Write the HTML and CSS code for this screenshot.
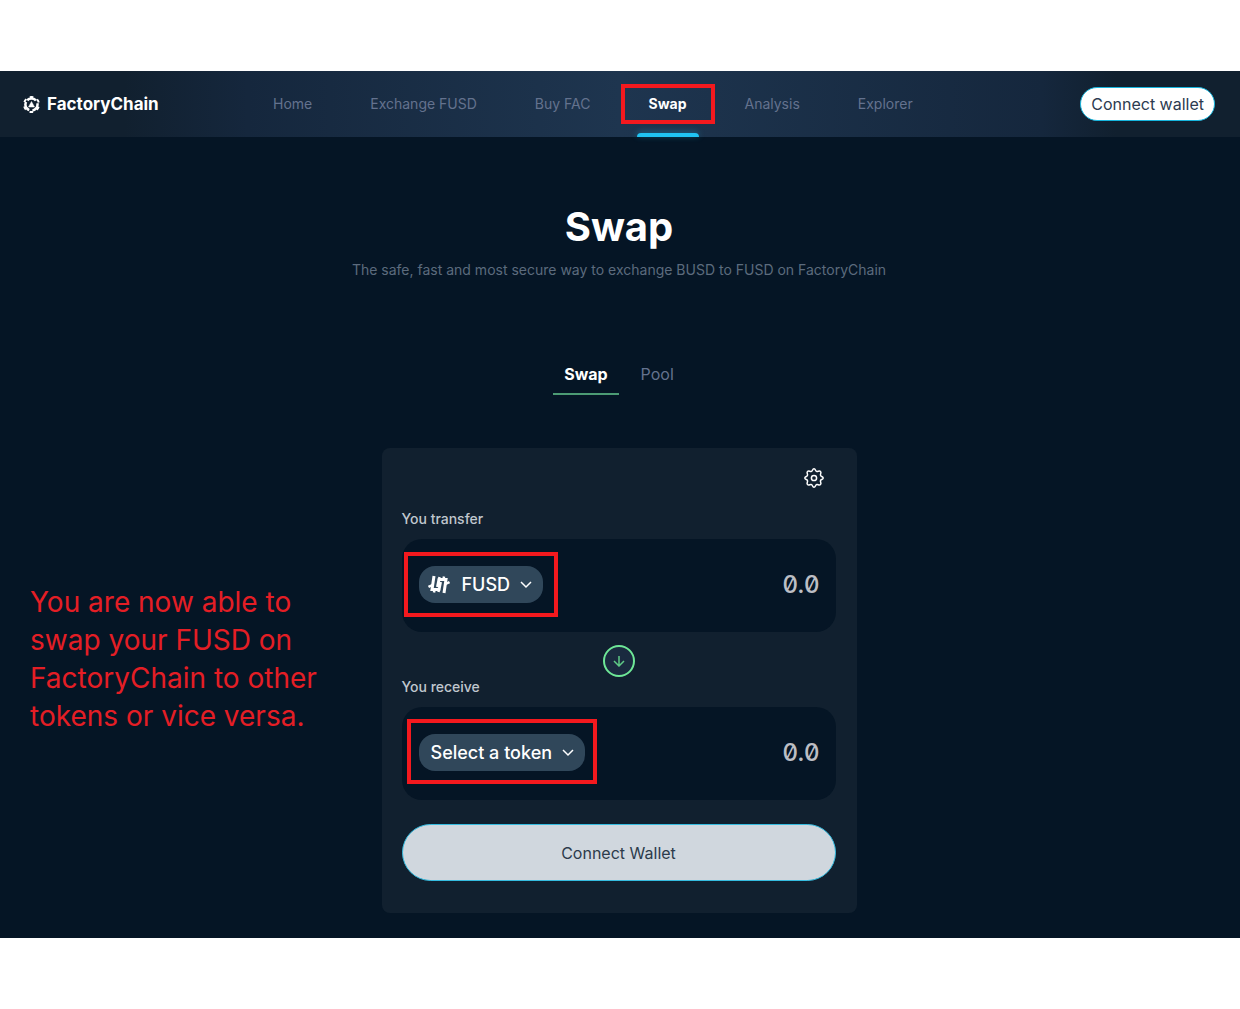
FILE: index.html
```html
<!DOCTYPE html>
<html lang="en">
<head>
  <meta charset="UTF-8">
  <title>Swap - FactoryChain</title>
  <meta name="viewport" content="width=device-width, initial-scale=1.0">
  <link rel="stylesheet" href="styles.css">
</head>

<body>
  <div class="page">
    <!-- Navigation -->
    <header class="topbar">
      <a href="#home" class="brand">
        <svg width="17" height="17" viewBox="0 0 34 34" fill="none" stroke="#fff">
          <circle cx="17" cy="17" r="12" stroke-width="5" stroke-dasharray="19 6.13" transform="rotate(-135 17 17)"/>
          <circle cx="17" cy="17" r="15" stroke-width="4" stroke-dasharray="7 8.7" transform="rotate(-103 17 17)"/>
          <path d="M17 11L23 22H11Z" fill="#fff" stroke-width="1"/>
        </svg>
        <span>FactoryChain</span>
      </a>
      <nav class="menu">
        <a href="#home">Home</a>
        <a href="#exchange">Exchange FUSD</a>
        <a href="#buy">Buy FAC</a>
        <a href="#swap" class="active mark">Swap</a>
        <a href="#analysis">Analysis</a>
        <a href="#explorer">Explorer</a>
      </nav>
      <button type="button" class="wallet-btn">Connect wallet</button>
    </header>

    <main id="swap">
      <!-- Title -->
      <section class="intro">
        <h1>Swap</h1>
        <p>The safe, fast and most secure way to exchange BUSD to FUSD on FactoryChain</p>
      </section>

      <div class="tabs">
        <a href="#swap" class="active">Swap</a>
        <a href="#pool">Pool</a>
      </div>

      <div class="content">
        <p class="note">You are now able to<br>swap your FUSD on<br>FactoryChain to other<br>tokens or vice versa.</p>

        <!-- Swap form -->
        <form class="card">
          <button type="button" class="settings" aria-label="Settings">
            <svg width="20" height="20" viewBox="0 0 20 20" fill="none" stroke="#fff" stroke-width="1.5" stroke-linejoin="round">
              <path d="M7.3 3.5C8.6 3.5 8.3 .8 10 .8C11.7 .8 11.4 3.5 12.7 3.5C13.8 4 15.2 2.2 16.5 3.5C17.8 4.8 16 6.2 16.5 7.3C16.5 8.6 19.2 8.3 19.2 10C19.2 11.7 16.5 11.4 16.5 12.7C16 13.8 17.8 15.2 16.5 16.5C15.2 17.8 13.8 16 12.7 16.5C11.4 16.5 11.7 19.2 10 19.2C8.3 19.2 8.6 16.5 7.3 16.5C6.2 16 4.8 17.8 3.5 16.5C2.2 15.2 4 13.8 3.5 12.7C3.5 11.4 .8 11.7 .8 10C.8 8.3 3.5 8.6 3.5 7.3C4 6.2 2.2 4.8 3.5 3.5C4.8 2.2 6.2 4 7.3 3.5Z"/>
              <circle cx="10" cy="10" r="2.6"/>
            </svg>
          </button>

          <label for="transfer">You transfer</label>
          <div class="amount">
            <button type="button" class="token mark">
              <svg class="token-logo" width="22" height="19" viewBox="0 0 44 38" fill="none" stroke="#fff" stroke-width="6">
                <path d="M12 2L8 29H22L25 14M32 36L36 9H22L19 24"/>
                <path stroke-width="5" d="M9 20L1 24M13 29L12 35M22 28L21 34M35 18L43 14M31 9L32 3M22 10L23 4"/>
              </svg>
              <span>FUSD</span>
              <svg width="12" height="8" viewBox="0 0 12 8" fill="none" stroke="#fff" stroke-width="1.5"><path d="M1 1L6 6L11 1"/></svg>
            </button>
            <input type="text" id="transfer" placeholder="0.0">
          </div>

          <button type="button" class="switch" aria-label="Switch tokens">
            <svg width="12" height="12" viewBox="0 0 12 12" fill="none" stroke="#5fca86" stroke-width="1.5"><path d="M6 1V11M1 6L6 11L11 6"/></svg>
          </button>

          <label for="receive">You receive</label>
          <div class="amount">
            <button type="button" class="token select mark">
              <span>Select a token</span>
              <svg width="12" height="8" viewBox="0 0 12 8" fill="none" stroke="#fff" stroke-width="1.5"><path d="M1 1L6 6L11 1"/></svg>
            </button>
            <input type="text" id="receive" placeholder="0.0">
          </div>

          <button type="button" class="connect">Connect Wallet</button>
        </form>
      </div>
    </main>
  </div>
</body>
</html>
```
FILE: styles.css
```css
/* General Layout */
* {
  box-sizing: border-box;
}

body {
  font-family: Inter, "Liberation Sans", sans-serif;
  margin: 0;
  padding: 71px 0;
  background: white;
}

a {
  text-decoration: none;
}

button,
input {
  font-family: inherit;
}

button {
  cursor: pointer;
}

.page {
  background: #051525;
  padding-bottom: 25px;
}

main {
  padding-right: 2px;
}

/* Header */
.topbar {
  display: grid;
  grid-template-columns: 250px 1fr auto;
  align-items: center;
  height: 66px;
  padding: 0 25px 0 23px;
  background: linear-gradient(90deg, #11202f 10%, #15273d 20%, #1e354f 50%, #15273d 84%, #11202f 90%);
}

.brand {
  display: flex;
  align-items: center;
  gap: 7px;
  color: white;
  font-size: 17px;
  font-weight: 700;
}

.menu {
  display: flex;
  gap: 58px;
  height: 66px;
}

.menu a {
  position: relative;
  color: #64728e;
  font-size: 14px;
  line-height: 66px;
}

.menu a.active {
  color: white;
  font-weight: 700;
}

.menu a.active::before {
  content: "";
  position: absolute;
  left: -12px;
  right: -12px;
  bottom: 0;
  height: 4px;
  border-radius: 4px 4px 0 0;
  background: #20c3f3;
  box-shadow: 0 -1px 6px rgba(32, 195, 243, 0.4);
}

.wallet-btn {
  height: 34px;
  padding: 0 10px;
  border: 1px solid #16b4dc;
  border-radius: 17px;
  background: white;
  color: #2c3b50;
  font-size: 16px;
}

/* Red frames around the highlighted controls */
.mark {
  position: relative;
}

.mark::after {
  content: "";
  position: absolute;
  inset: -14px -15px;
  border: 4px solid #f4191e;
  pointer-events: none;
}

.menu .mark::after {
  inset: 13px -28px;
}

.token.select.mark::after {
  inset: -15px -12px -13px;
}

/* Title and tabs */
.intro {
  padding-top: 66px;
  text-align: center;
}

h1 {
  margin: 0;
  color: white;
  font-size: 40px;
  line-height: 48px;
}

.intro p {
  margin: 9px 0 0;
  color: #5c6b7d;
  font-size: 14px;
  line-height: 20px;
}

.tabs {
  display: flex;
  justify-content: center;
  gap: 11px;
  margin-top: 76px;
}

.tabs a {
  padding: 7px 11px 8px;
  border-bottom: 2px solid transparent;
  color: #64728e;
  font-size: 16px;
  line-height: 22px;
}

.tabs a.active {
  border-color: #4c9b74;
  color: white;
  font-weight: 700;
}

/* Note and swap card */
.content {
  display: grid;
  grid-template-columns: 1fr 475px 1fr;
  margin-top: 53px;
}

.note {
  margin: 135px 0 0 30px;
  color: #e41e25;
  font-size: 28px;
  line-height: 38px;
  white-space: nowrap;
}

.card {
  display: flex;
  flex-direction: column;
  padding: 20px 21px 32px 20px;
  border-radius: 8px;
  background: #11202f;
}

.card label {
  color: #c0c7ce;
  font-size: 14px;
  font-weight: 500;
  line-height: 20px;
}

.settings {
  display: flex;
  align-self: flex-end;
  margin: 0 12px 21px 0;
  padding: 0;
  border: 0;
  background: none;
}

.amount {
  display: flex;
  align-items: center;
  justify-content: space-between;
  height: 93px;
  margin-top: 10px;
  padding: 0 16px 2px 17px;
  border-radius: 20px;
  background: #051525;
}

.token {
  display: flex;
  align-items: center;
  gap: 10px;
  height: 37px;
  padding: 0 11px 0 9px;
  border: 0;
  border-radius: 16px;
  background: #30475a;
  color: white;
  font-size: 18px;
  font-weight: 500;
  white-space: nowrap;
}

.token.select {
  padding-left: 12px;
}

.token-logo {
  margin-right: 2px;
}

.amount input {
  width: 120px;
  padding: 0;
  border: 0;
  background: none;
  color: white;
  font-size: 24px;
  font-weight: 500;
  font-feature-settings: "zero";
  text-align: right;
}

.amount input::placeholder {
  color: #bcbec4;
}

.switch {
  display: flex;
  align-items: center;
  justify-content: center;
  align-self: center;
  width: 32px;
  height: 32px;
  margin: 13px 0 0;
  padding: 0;
  border: 2px solid #6ee797;
  border-radius: 50%;
  background: #1a2a3f;
}

.connect {
  height: 57px;
  margin-top: 24px;
  border: 1px solid #35bce0;
  border-radius: 29px;
  background: #d0d7de;
  color: #2c3b4b;
  font-size: 16px;
}
```
